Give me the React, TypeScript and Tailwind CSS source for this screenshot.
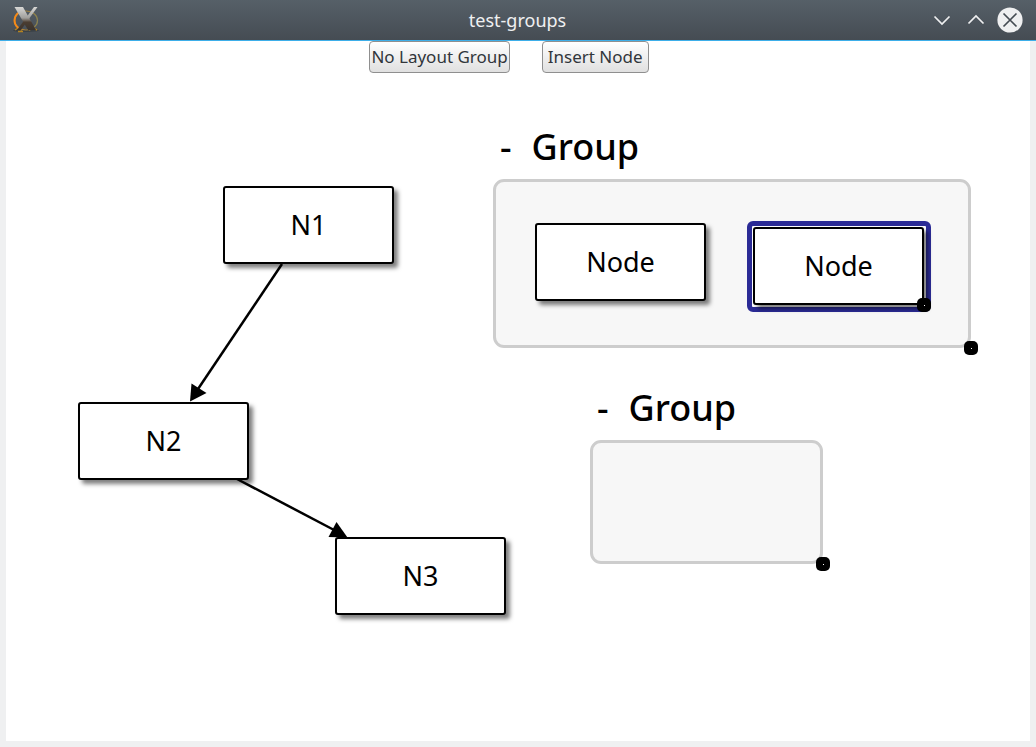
import type { ReactNode } from "react";

function AppLogo() {
  return (
    <svg width="28" height="28" viewBox="0 0 28 28" aria-hidden="true">
      <defs>
        <linearGradient id="metal" gradientUnits="userSpaceOnUse" x1="0" y1="1" x2="0" y2="27">
          <stop offset="0" stopColor="#d8d8d6" />
          <stop offset="0.42" stopColor="#a09f9c" />
          <stop offset="0.58" stopColor="#4b3d31" />
          <stop offset="1" stopColor="#33302e" />
        </linearGradient>
        <linearGradient id="ring" x1="0" y1="0" x2="1" y2="0">
          <stop offset="0" stopColor="#f08a1c" />
          <stop offset="0.4" stopColor="#a8803a" />
          <stop offset="1" stopColor="#8a8350" />
        </linearGradient>
      </defs>
      <ellipse cx="14" cy="24.500" rx="13" ry="1.500" fill="#30363a" opacity="0.6" />
      <path d="M3 24l3-2 4 2M17 24l4-2 4 2M6 25.500h5" fill="none" stroke="#b58320" strokeWidth="1.500" />
      <ellipse cx="14" cy="14.500" rx="11.500" ry="9.500" fill="none" stroke="url(#ring)" strokeWidth="1.200" />
      <path d="M7 6.500C1.500 10 1 17.500 6 21.500" fill="none" stroke="#f58a18" strokeWidth="2" />
      <path d="M22 1h3.500L9 24H5z" fill="url(#metal)" />
      <path d="M2.500 1h8.500L24 24h-8z" fill="url(#metal)" />
    </svg>
  );
}

function TitleBar() {
  return (
    <header className="grid h-[41px] grid-cols-[1fr_auto_1fr] items-center border-b border-[#3daee9] bg-linear-to-b from-[#566068] to-[#454c53] pr-[13px] pl-3">
      <AppLogo />
      <h1 className="text-[18px] leading-6 text-[#eff0f1]">test-groups</h1>
      <div className="flex items-center justify-end gap-2">
        <button type="button" aria-label="Minimize" className="size-[26px]">
          <svg viewBox="0 0 26 26" fill="none" stroke="#eff0f1" strokeWidth="1.700">
            <path d="M5.500 9.500l7.500 7.500 7.500-7.500" />
          </svg>
        </button>
        <button type="button" aria-label="Maximize" className="size-[26px]">
          <svg viewBox="0 0 26 26" fill="none" stroke="#eff0f1" strokeWidth="1.700">
            <path d="M5.500 16.500L13 9l7.500 7.500" />
          </svg>
        </button>
        <button type="button" aria-label="Close" className="size-[26px]">
          <svg viewBox="0 0 26 26" fill="none" stroke="#454c53" strokeWidth="1.700">
            <circle cx="13" cy="13" r="12.600" fill="#eff0f1" stroke="none" />
            <path d="M6.500 6.500l13 13M19.500 6.500l-13 13" />
          </svg>
        </button>
      </div>
    </header>
  );
}

function ToolButton({ children }: { children: ReactNode }) {
  return (
    <button
      type="button"
      className="h-8 rounded-[4px] border border-[#8f8f8f] bg-linear-to-b from-white to-[#e0e0e0] text-[17px] leading-6 whitespace-nowrap text-[#31363b] first:px-px last:px-[5px]"
    >
      {children}
    </button>
  );
}

function DiagramNode({ label, place }: { label: string; place: string }) {
  return (
    <div
      className={`absolute flex h-[78px] w-[171px] items-center justify-center rounded-[3px] border-2 border-black bg-white pb-px text-[27px] leading-9 text-black shadow-[4px_4px_4px_rgba(0,0,0,0.5)] ${place}`}
    >
      {label}
    </div>
  );
}

function ResizeHandle({ place }: { place: string }) {
  return (
    <span className={`absolute flex size-[14px] items-center justify-center rounded-[5px] bg-black ${place}`}>
      <span className="size-px bg-white" />
    </span>
  );
}

function Group({ place, size, children }: { place: string; size: string; children?: ReactNode }) {
  return (
    <section className={`absolute ${place}`}>
      <h2 className="flex h-[53px] gap-[20px] pl-[7px] text-[36px] leading-[42px] font-medium text-black">
        <span>-</span>
        <span>Group</span>
      </h2>
      <div className={`relative rounded-[11px] border-3 border-[#cdcdcd] bg-[#f7f7f7] ${size}`}>
        {children}
        <ResizeHandle place="-right-[10px] -bottom-[10px]" />
      </div>
    </section>
  );
}

export default function App() {
  return (
    <div className="flex min-h-screen flex-col bg-[#eff0f1] font-['Noto_Sans',sans-serif]">
      <TitleBar />
      <main className="mx-[6px] mb-[6px] flex flex-1 flex-col bg-white">
        <div className="flex justify-center gap-8 pr-[18px]">
          <ToolButton>No Layout Group</ToolButton>
          <ToolButton>Insert Node</ToolButton>
        </div>
        <div className="relative min-h-[600px] flex-1">
          <DiagramNode label="N1" place="top-[113px] left-[217px]" />
          <DiagramNode label="N2" place="top-[329px] left-[72px]" />
          <DiagramNode label="N3" place="top-[464px] left-[329px]" />
          <svg className="absolute top-0 left-0" width="520" height="620" viewBox="0 0 520 620" aria-hidden="true">
            <g stroke="#000" strokeWidth="2.500">
              <path d="M276 191L190 319" />
              <path d="M231 406L330 458" />
            </g>
            <path d="M184 328.500L185.500 310.500L200.500 320z" />
            <path d="M341.500 464.500L330.500 449L322.500 464z" />
          </svg>
          <Group place="top-[53px] left-[487px]" size="h-[169px] w-[478px]">
            <DiagramNode label="Node" place="top-[41px] left-[39px]" />
            <div className="absolute top-[39px] left-[251px] h-[91px] w-[184px] rounded-[6px] border-5 border-[#2b2b96] bg-white">
              <DiagramNode label="Node" place="top-px left-px" />
              <ResizeHandle place="-right-[5px] -bottom-[5px]" />
            </div>
          </Group>
          <Group place="top-[314px] left-[584px]" size="h-[124px] w-[233px]" />
        </div>
      </main>
    </div>
  );
}
